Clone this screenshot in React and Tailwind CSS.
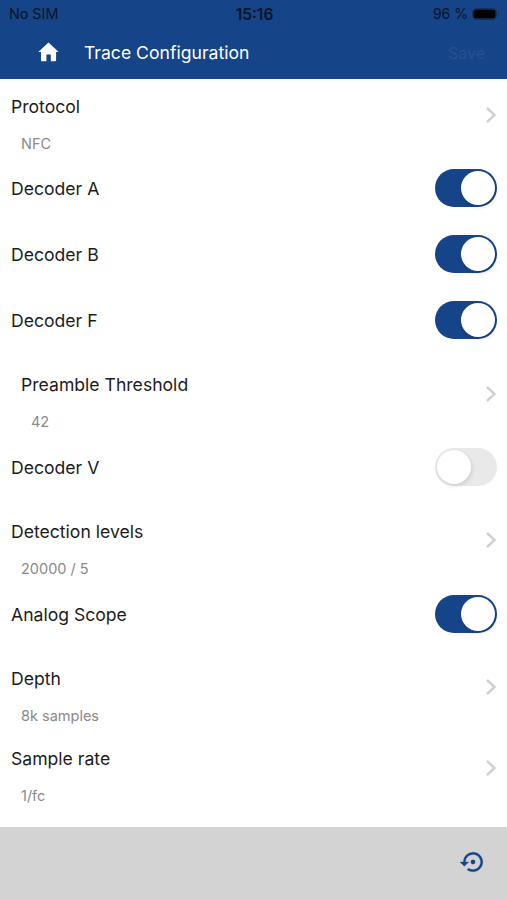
import { useState } from 'react'

const SETTINGS = [
  { id: 'protocol', label: 'Protocol', value: 'NFC' },
  { id: 'decoderA', label: 'Decoder A', enabled: true },
  { id: 'decoderB', label: 'Decoder B', enabled: true },
  { id: 'decoderF', label: 'Decoder F', enabled: true },
  { id: 'preamble', label: 'Preamble Threshold', value: '42', nested: true },
  { id: 'decoderV', label: 'Decoder V', enabled: false },
  { id: 'levels', label: 'Detection levels', value: '20000 / 5' },
  { id: 'scope', label: 'Analog Scope', enabled: true },
  { id: 'depth', label: 'Depth', value: '8k samples' },
  { id: 'rate', label: 'Sample rate', value: '1/fc' },
]

function StatusBar() {
  return (
    <div className="grid h-7 grid-cols-3 items-center pl-[9px] pr-[7px] text-[14px] text-[#061327]">
      <span className="text-[14.3px]">No SIM</span>
      <span className="pt-px text-center text-[15.5px] font-semibold">15:16</span>
      <div className="-mt-px flex items-center justify-end gap-1">
        <span>96 %</span>
        <svg className="h-3 w-7" viewBox="0 0 28 12">
          <rect x="0.5" y="0.5" width="24" height="11" rx="3.5" fill="none" stroke="#0f3264" />
          <rect x="1.5" y="1.5" width="22" height="9" rx="2.5" fill="#000" />
          <path d="M26 4v4c1.4-.6 1.4-3.4 0-4z" fill="#0f3264" />
        </svg>
      </div>
    </div>
  )
}

function RestoreIcon() {
  return (
    <svg className="size-[26px]" viewBox="0 0 24 24" fill="#164488" stroke="#164488" strokeWidth="0.3">
      <circle cx="12" cy="12" r="2" />
      <path d="M12 3a9 9 0 0 0-9 9H0l4 4 4-4H5a7 7 0 1 1 2.94 5.7l-1.42 1.44A9 9 0 1 0 12 3z" />
    </svg>
  )
}

function Toggle({ checked, onChange }) {
  return (
    <button
      role="switch"
      aria-checked={checked}
      onClick={onChange}
      className={`-mt-px flex h-[38px] w-[62px] items-center rounded-full px-0.5 ${
        checked ? 'justify-end bg-[#164488]' : 'justify-start bg-[#e9e9e9]'
      }`}
    >
      <span className="size-[34px] rounded-full bg-white shadow-[1px_2px_4px_rgba(0,0,0,0.12)]" />
    </button>
  )
}

function ToggleRow({ label, checked, onChange }) {
  return (
    <div className="flex h-[66px] items-center justify-between pl-[11px] pr-[10px]">
      <span className="pt-0.5">{label}</span>
      <Toggle checked={checked} onChange={onChange} />
    </div>
  )
}

function LinkRow({ label, value, nested }) {
  return (
    <div className={`flex h-[80.7px] items-start justify-between pr-[10px] ${nested ? 'pl-[21px]' : 'pl-[11px]'}`}>
      <div className="pt-[17.6px]">
        <p className="leading-7">{label}</p>
        <p className="mt-3 pl-[10px] text-[14.5px] leading-[22px] text-[#8a8a8a]">{value}</p>
      </div>
      <svg className="mt-8 h-4 w-3" viewBox="0 0 12 16" fill="none" stroke="#d0d0d0" strokeWidth="2.4">
        <path d="M2 1l7.5 7L2 15" />
      </svg>
    </div>
  )
}

function App() {
  const [settings, setSettings] = useState(SETTINGS)

  const toggle = (id) => {
    setSettings(settings.map((s) => (s.id === id ? { ...s, enabled: !s.enabled } : s)))
  }

  return (
    <div className="flex h-[900px] w-[507px] flex-col overflow-hidden bg-white font-['Inter','Liberation_Sans',sans-serif] text-[17.6px] text-[#1c1c1c]">
      <header className="h-[79px] shrink-0 bg-[#164488]">
        <StatusBar />
        <div className="flex h-12 items-center pl-[38px] pr-[22px]">
          <svg className="h-5 w-[21px]" viewBox="0 0 21 20" fill="#fff">
            <path d="M10.5.6 20.7 10h-2.6v8.3a1 1 0 0 1-1 1h-4.3v-6.8H8.4v6.8H4a1 1 0 0 1-1-1V10H.3z" />
          </svg>
          <h1 className="ml-[25px] pt-0.5 text-white">Trace Configuration</h1>
          <button disabled className="ml-auto pt-px text-[16px] text-[#26508f]">Save</button>
        </div>
      </header>

      <main className="-mt-1 flex-1">
        {settings.map((s) =>
          'enabled' in s ? (
            <ToggleRow key={s.id} label={s.label} checked={s.enabled} onChange={() => toggle(s.id)} />
          ) : (
            <LinkRow key={s.id} label={s.label} value={s.value} nested={s.nested} />
          )
        )}
      </main>

      <footer className="flex h-[73px] shrink-0 items-center justify-end bg-[#d3d3d3] pb-[3px] pr-[21px]">
        <RestoreIcon />
      </footer>
    </div>
  )
}

export default App
